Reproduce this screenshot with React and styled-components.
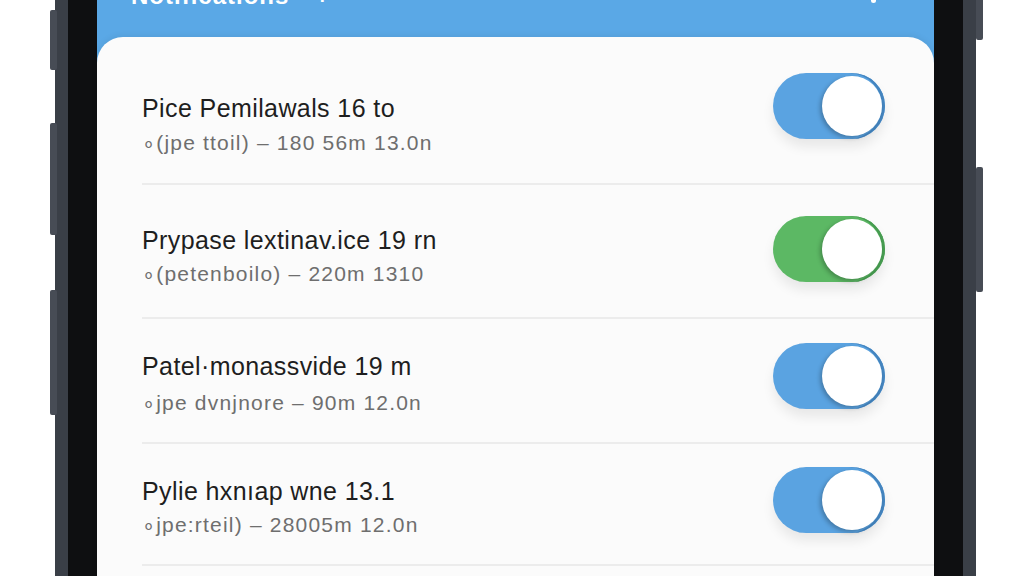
import React from 'react';
import styled, { createGlobalStyle } from 'styled-components'

const GlobalStyle = createGlobalStyle`
  html, body {
    margin: 0;
    padding: 0;
    background: #fff;
  }
  body {
    font-family: "Liberation Sans", Arial, sans-serif;
  }
`

const Page = styled.div`
  width: 1024px;
  height: 576px;
  overflow: hidden;
  background: #fff;
`

const Phone = styled.div`
  position: relative;
  margin: -40px 0 0 55px;
  width: 921px;
  height: 700px;
  box-sizing: border-box;
  background: #0e0f11;
  border-left: 13px solid #3a3f47;
  border-right: 13px solid #3a3f47;
  padding: 0 29px;
`

const SideButton = styled.div`
  position: absolute;
  top: ${p => p.top}px;
  height: ${p => p.h}px;
  width: 7px;
  background: #474c55;
  border-radius: 2px;
  ${p => (p.right ? 'right: -20px;' : 'left: -18px;')}
`

const Screen = styled.div`
  height: 100%;
  background: #5aa8e6;
  display: flex;
  flex-direction: column;
`

const Header = styled.div`
  height: 77px;
  box-sizing: border-box;
  padding: 22px 58px 0 34px;
  display: flex;
  align-items: flex-start;
  color: #fff;
`

const HeaderTitle = styled.div`
  font-size: 24px;
  line-height: 28px;
  font-weight: bold;
  letter-spacing: 1px;
`

const HeaderIcon = styled.div`
  margin-left: 26px;
  font-size: 24px;
  line-height: 28px;
  font-weight: bold;
`

const HeaderSpacer = styled.div`
  flex: 1;
`

const HeaderDot = styled.div`
  width: 5px;
  height: 5px;
  border-radius: 3px;
  margin-top: 16px;
  background: #fff;
`

const Card = styled.div`
  flex: 1;
  background: #fbfbfb;
  border-radius: 26px 26px 0 0;
  box-shadow: 0 -2px 6px rgba(0, 0, 0, 0.06);
`

const Row = styled.div`
  margin-left: 45px;
  padding: ${p => p.pt}px 49px ${p => p.pb}px 0;
  border-bottom: 2px solid #ececec;
  display: flex;
  align-items: flex-start;
  justify-content: space-between;
`

const TextBlock = styled.div`
  display: flex;
  flex-direction: column;
`

const Title = styled.div`
  font-size: 25px;
  line-height: 30px;
  color: #1e1e1e;
  letter-spacing: 0.4px;
`

const Subtitle = styled.div`
  margin-top: ${p => p.gap}px;
  font-size: 21px;
  line-height: 30px;
  color: #6e6e6e;
  letter-spacing: 1.2px;
`

const Toggle = styled.div`
  margin-top: ${p => p.offset}px;
  width: 112px;
  height: 66px;
  box-sizing: border-box;
  border-radius: 33px;
  padding: 3px;
  display: flex;
  justify-content: flex-end;
  align-items: center;
  background: ${p => (p.green ? '#5cb864' : '#5aa3e1')};
  box-shadow: inset -3px 0 0 ${p => (p.green ? '#479c51' : '#4585bf')},
    0 8px 12px rgba(0, 0, 0, 0.08);
`

const Knob = styled.div`
  width: 60px;
  height: 60px;
  border-radius: 50%;
  background: #fff;
  box-shadow: -2px 2px 4px rgba(0, 0, 0, 0.25);
`

const items = [
  { title: 'Pice Pemilawals 16 to', sub: '∘(jpe ttoil) – 180 56m 13.0n', pt: 56, gap: 5, pb: 25, offset: -20 },
  { title: 'Prypase lextinav.ice 19 rn', sub: '∘(petenboilo) – 220m 1310', pt: 40, gap: 4, pb: 28, offset: -9, green: true },
  { title: 'Patel·monassvide 19 m', sub: '∘jpe dvnjnore – 90m 12.0n', pt: 32, gap: 7, pb: 24, offset: -8 },
  { title: 'Pylie hxnıap wne 13.1', sub: '∘jpe:rteil) – 28005m 12.0n', pt: 32, gap: 4, pb: 24, offset: -9 },
]

const App = () => {
  return (
    <Page>
      <GlobalStyle />
      <Phone>
        <SideButton top={50} h={60} />
        <SideButton top={163} h={112} />
        <SideButton top={330} h={125} />
        <SideButton right top={20} h={60} />
        <SideButton right top={207} h={125} />
        <Screen>
          <Header>
            <HeaderTitle>Notifications</HeaderTitle>
            <HeaderIcon>+</HeaderIcon>
            <HeaderSpacer />
            <HeaderDot />
          </Header>
          <Card>
            {items.map((it, i) => (
              <Row key={i} pt={it.pt} pb={it.pb}>
                <TextBlock>
                  <Title>{it.title}</Title>
                  <Subtitle gap={it.gap}>{it.sub}</Subtitle>
                </TextBlock>
                <Toggle offset={it.offset} green={it.green}>
                  <Knob />
                </Toggle>
              </Row>
            ))}
          </Card>
        </Screen>
      </Phone>
    </Page>
  )
}

export default App;
